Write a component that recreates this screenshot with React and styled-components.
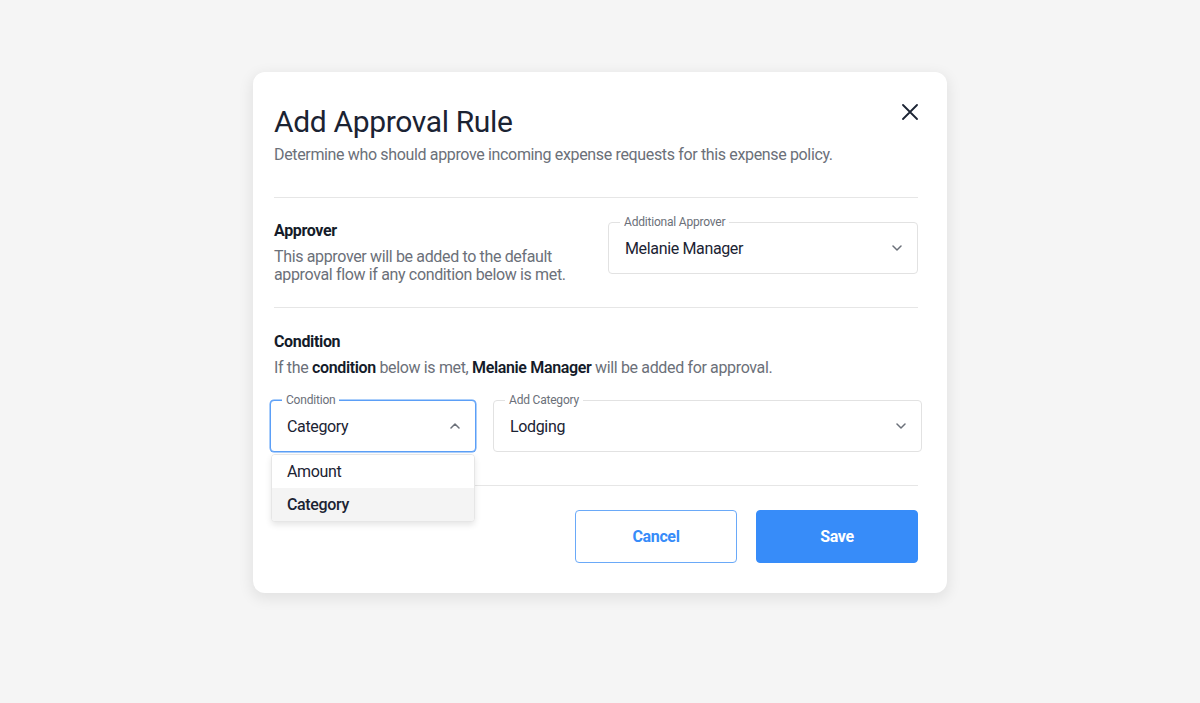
import React, { useState } from "react";
import styled, { createGlobalStyle } from "styled-components";

const GlobalStyle = createGlobalStyle`
  body {
    margin: 0;
    background-color: #f5f5f5;
    font-family: Roboto, "Liberation Sans", Arial, sans-serif;
    letter-spacing: -0.35px;
    -webkit-font-smoothing: antialiased;
  }
`;

const Page = styled.div`
  display: flex;
  justify-content: center;
  align-items: flex-start;
  padding-top: 72px;
  min-height: 703px;
  box-sizing: border-box;
`;

const Modal = styled.div`
  width: 694px;
  box-sizing: border-box;
  padding: 32px 29px 30px 21px;
  background-color: white;
  border-radius: 12px;
  box-shadow: 0px 4px 14px 2px rgba(0, 0, 0, 0.08);
`;

const Header = styled.div`
  display: flex;
  justify-content: space-between;
  align-items: flex-start;
  padding-bottom: 31px;
`;

const Title = styled.h1`
  margin: 0;
  font-size: 30px;
  line-height: 36px;
  font-weight: 400;
  color: #1b2333;
`;

const Subtitle = styled.p`
  margin: 4px 0 0 0;
  font-size: 16px;
  line-height: 22px;
  color: #6b7079;
`;

const CloseButton = styled.button`
  width: 16px;
  height: 16px;
  padding: 0;
  border: none;
  background: transparent;
  cursor: pointer;
  display: flex;
`;

const Divider = styled.div`
  height: 1px;
  background-color: #e6e6e6;
`;

const Section = styled.div`
  display: flex;
  flex-direction: ${({ stacked }) => (stacked ? "column" : "row")};
  justify-content: space-between;
  align-items: ${({ stacked }) => (stacked ? "stretch" : "flex-start")};
  padding: ${({ stacked }) => (stacked ? "24px 0 33px 0" : "23px 0 23px 0")};
`;

const SectionText = styled.div`
  width: 300px;
`;

const SectionTitle = styled.h3`
  margin: 0;
  font-size: 16px;
  line-height: 20px;
  font-weight: 700;
  color: #141b29;
`;

const SectionDescription = styled.p`
  margin: 7px 0 0 0;
  font-size: 16px;
  line-height: 18px;
  color: #6b7079;

  b {
    font-weight: 600;
    color: #141b29;
  }
`;

const SelectRow = styled.div`
  display: flex;
  gap: 17px;
  margin: 23px -4px 0 -4px;
`;

const SelectBox = styled.div`
  position: relative;
  box-sizing: border-box;
  height: 52px;
  width: ${({ width }) => (width ? `${width}px` : "auto")};
  flex: ${({ width }) => (width ? "none" : "1")};
  margin-top: ${({ offset }) => offset || 0}px;
  display: flex;
  align-items: center;
  justify-content: space-between;
  padding: 0 15px 0 16px;
  border: 1px solid ${({ focused }) => (focused ? "#5b9ff7" : "#e2e2e2")};
  border-radius: 4px;
  background-color: white;
  box-shadow: ${({ focused }) => (focused ? "0 0 0 0.5px #5b9ff7" : "none")};
  cursor: pointer;
`;

const SelectLabel = styled.span`
  position: absolute;
  top: -8px;
  left: 11px;
  padding: 0 4px;
  background-color: white;
  font-size: 12px;
  line-height: 14px;
  letter-spacing: -0.2px;
  color: #6b7079;
`;

const SelectValue = styled.span`
  font-size: 16px;
  color: #1b2333;
`;

const Chevron = styled.svg`
  width: 10px;
  height: 6px;
  transform: ${({ up }) => (up ? "rotate(180deg)" : "none")};
`;

const Menu = styled.div`
  position: absolute;
  top: calc(100% + 3px);
  left: 0;
  right: 0;
  z-index: 2;
  background-color: white;
  border: 1px solid #e6e6e6;
  border-radius: 4px;
  box-shadow: 0px 3px 6px rgba(0, 0, 0, 0.1);
  overflow: hidden;
`;

const MenuItem = styled.div`
  height: 33px;
  display: flex;
  align-items: center;
  padding-left: 15px;
  font-size: 16px;
  font-weight: ${({ selected }) => (selected ? 500 : 400)};
  color: #1b2333;
  background-color: ${({ selected }) => (selected ? "#f4f4f4" : "white")};
`;

const Footer = styled.div`
  display: flex;
  justify-content: flex-end;
  gap: 19px;
  padding-top: 24px;
`;

const Button = styled.button`
  width: 162px;
  height: 53px;
  box-sizing: border-box;
  border-radius: 4px;
  font-family: inherit;
  font-size: 16px;
  font-weight: 700;
  letter-spacing: -0.35px;
  cursor: pointer;
  border: 1px solid ${({ primary }) => (primary ? "#378cf9" : "#6aa9f8")};
  background-color: ${({ primary }) => (primary ? "#378cf9" : "white")};
  color: ${({ primary }) => (primary ? "white" : "#378cf9")};
`;

function ChevronIcon({ up }) {
  return (
    <Chevron up={up ? 1 : 0} viewBox="0 0 10 6" fill="none">
      <path
        d="M1 1l4 4 4-4"
        stroke="#6b7079"
        strokeWidth="1.5"
        strokeLinecap="round"
        strokeLinejoin="round"
      />
    </Chevron>
  );
}

function Select({ label, value, width, offset, open, onToggle, children }) {
  return (
    <SelectBox width={width} offset={offset} focused={open} onClick={onToggle}>
      <SelectLabel>{label}</SelectLabel>
      <SelectValue>{value}</SelectValue>
      <ChevronIcon up={open} />
      {open && children}
    </SelectBox>
  );
}

export default function App() {
  const [conditionOpen, setConditionOpen] = useState(true);
  const [condition, setCondition] = useState("Category");
  const options = ["Amount", "Category"];

  return (
    <Page>
      <GlobalStyle />
      <Modal>
        <Header>
          <div>
            <Title>Add Approval Rule</Title>
            <Subtitle>
              Determine who should approve incoming expense requests for this
              expense policy.
            </Subtitle>
          </div>
          <CloseButton aria-label="Close">
            <svg width="16" height="16" viewBox="0 0 16 16" fill="none">
              <path
                d="M1 1l14 14M15 1L1 15"
                stroke="#1b2333"
                strokeWidth="1.8"
                strokeLinecap="round"
              />
            </svg>
          </CloseButton>
        </Header>
        <Divider />
        <Section>
          <SectionText>
            <SectionTitle>Approver</SectionTitle>
            <SectionDescription>
              This approver will be added to the default approval flow if any
              condition below is met.
            </SectionDescription>
          </SectionText>
          <Select
            label="Additional Approver"
            value="Melanie Manager"
            width={310}
            offset={1}
          />
        </Section>
        <Divider />
        <Section stacked>
          <SectionTitle>Condition</SectionTitle>
          <SectionDescription>
            If the <b>condition</b> below is met, <b>Melanie Manager</b> will be
            added for approval.
          </SectionDescription>
          <SelectRow>
            <Select
              label="Condition"
              value={condition}
              width={206}
              open={conditionOpen}
              onToggle={() => setConditionOpen(!conditionOpen)}
            >
              <Menu>
                {options.map((option) => (
                  <MenuItem
                    key={option}
                    selected={option === condition}
                    onClick={() => setCondition(option)}
                  >
                    {option}
                  </MenuItem>
                ))}
              </Menu>
            </Select>
            <Select label="Add Category" value="Lodging" />
          </SelectRow>
        </Section>
        <Divider />
        <Footer>
          <Button>Cancel</Button>
          <Button primary>Save</Button>
        </Footer>
      </Modal>
    </Page>
  );
}
